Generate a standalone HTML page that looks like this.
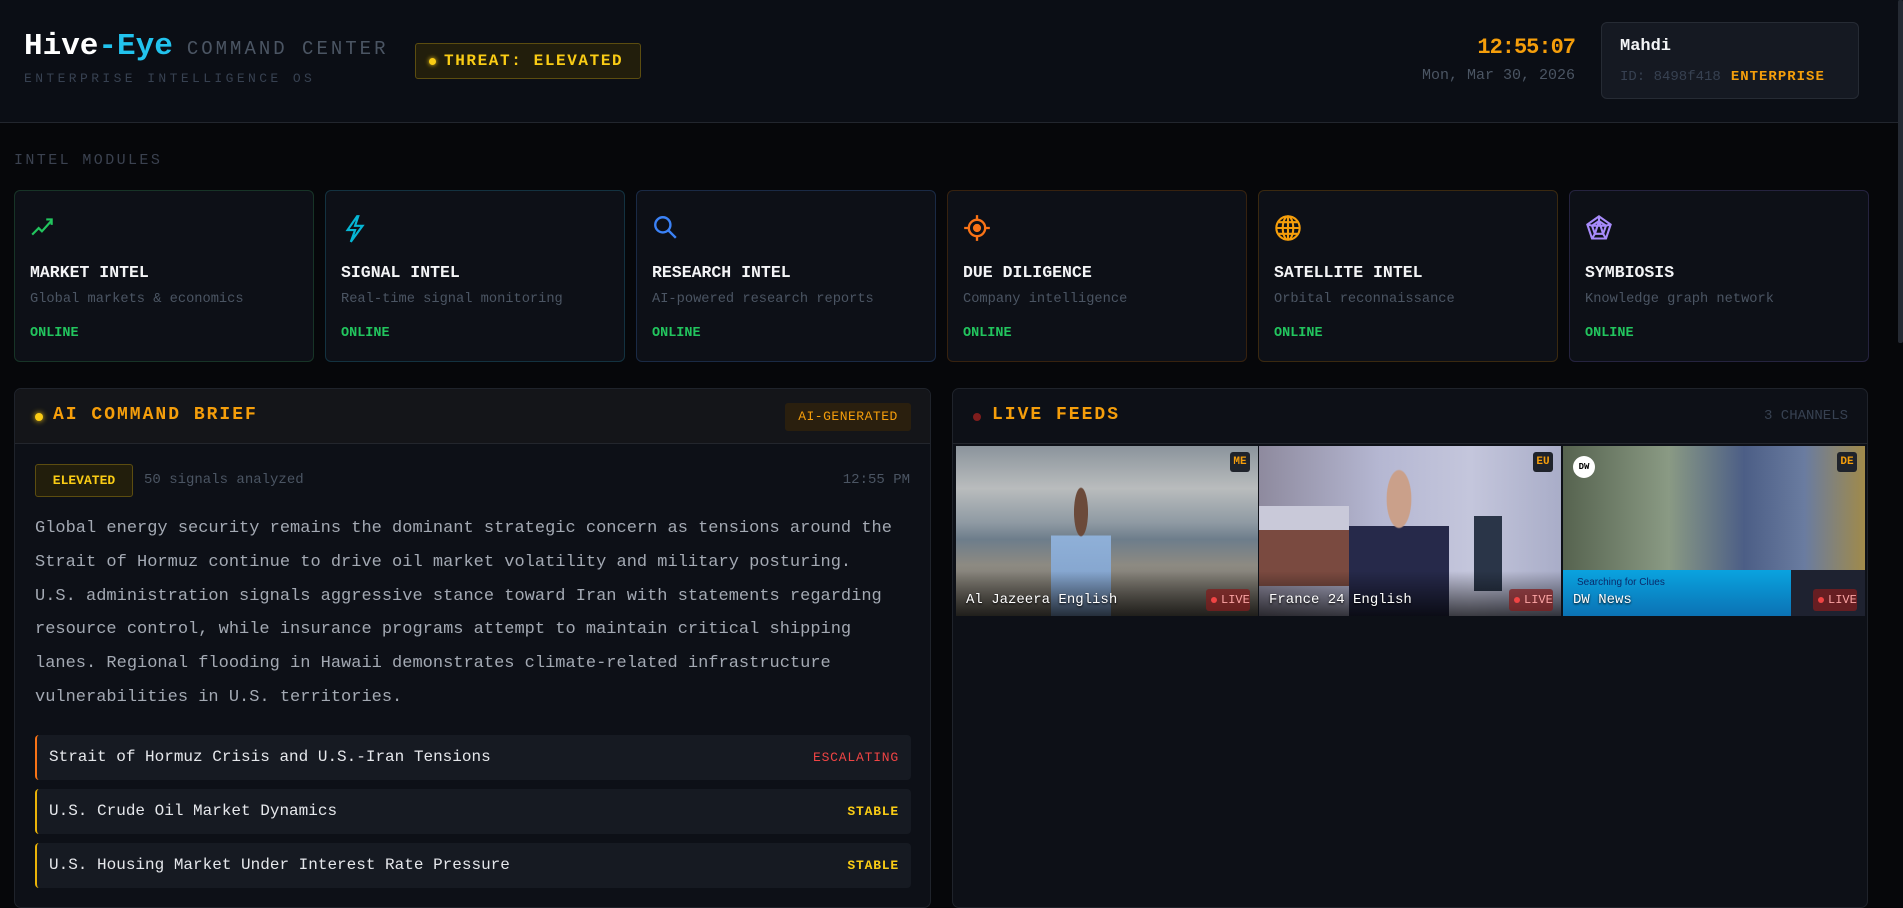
<!DOCTYPE html>
<html><head><meta charset="utf-8"><style>
*{box-sizing:border-box;margin:0;padding:0}
html,body{width:1903px;height:885px;overflow:hidden;background:#06070a;font-family:"Liberation Mono",monospace;color:#e5e7eb}
.abs{position:absolute}
header{position:absolute;left:0;top:0;width:1903px;height:123px;background:#0b0e15;border-bottom:1px solid #22262e}
.logo{left:24px;top:29px;font-size:31px;font-weight:bold;color:#fff;white-space:nowrap}
.logo .e{color:#22c3ee}
.logo .cc{font-size:19px;font-weight:normal;color:#4b5563;letter-spacing:3px;margin-left:14px}
.sub{left:24px;top:71px;font-size:13px;color:#374151;letter-spacing:3.4px;white-space:nowrap}
.threat{left:415px;top:43px;width:226px;height:36px;background:#221e0c;border:1px solid #5c4d10;border-radius:3px;color:#facc15;font-weight:bold;font-size:16px;letter-spacing:1.6px;line-height:34px;padding-left:28px;white-space:nowrap}
.threat:before{content:"";position:absolute;left:13px;top:14px;width:7px;height:7px;border-radius:50%;background:#facc15;box-shadow:0 0 5px #facc15}
.clock{right:328px;top:35px;font-size:22px;font-weight:bold;color:#f59e0b;letter-spacing:-1px}
.date{right:328px;top:67px;font-size:15px;color:#4b5563;white-space:nowrap}
.user{left:1601px;top:22px;width:258px;height:77px;background:#151922;border:1px solid #262b34;border-radius:6px}
.user .n{position:absolute;left:18px;top:14px;font-size:17px;font-weight:bold;color:#f3f4f6}
.user .i{position:absolute;left:18px;top:46px;font-size:14px;color:#374151;white-space:nowrap}
.user .i b{color:#f59e0b;letter-spacing:1px;margin-left:10px}
.scroll{left:1898px;top:0;width:5px;height:343px;background:#252a33;border-radius:2px}
.mods{left:14px;top:152px;font-size:15px;color:#3b4250;letter-spacing:2.4px}
.card{position:absolute;top:190px;width:300px;height:172px;background:#0d1017;border:1px solid;border-radius:6px}
.card svg{position:absolute;left:15px;top:23px}
.card .t{position:absolute;left:15px;top:72px;font-size:16.5px;font-weight:bold;color:#f3f4f6;white-space:nowrap}
.card .d{position:absolute;left:15px;top:101px;font-size:13.7px;color:#4b5563;white-space:nowrap}
.card .o{position:absolute;left:15px;top:135px;font-size:13.5px;font-weight:bold;color:#22c55e}
.panel{position:absolute;top:388px;height:520px;background:#0d1017;border:1px solid #1f232b;border-radius:7px;overflow:hidden}
.ph{position:absolute;left:0;top:0;right:0;height:55px;border-bottom:1px solid #23262d}
.ptitle{position:absolute;left:38px;top:16px;font-size:18px;font-weight:bold;color:#f59e0b;letter-spacing:2px;white-space:nowrap}
.dot{position:absolute;left:20px;top:24px;width:8px;height:8px;border-radius:50%}
.row{position:absolute;left:20px;width:876px;height:45px;background:#161a22;border-radius:4px;border-left:2px solid}
.row span{position:absolute;left:12px;top:13px;font-size:16px;color:#e5e7eb;white-space:nowrap}
.row b{position:absolute;right:12px;top:15px;font-size:13px;letter-spacing:.8px}
.tile{position:absolute;top:57px;height:170px;overflow:hidden}
.tag{position:absolute;right:8px;top:6px;width:20px;height:20px;background:#1f232b;color:#f59e0b;font-size:11px;font-weight:bold;text-align:center;line-height:20px;border-radius:3px}
.lbl{position:absolute;left:10px;bottom:8px;font-size:14px;color:#fff;white-space:nowrap;text-shadow:0 1px 2px #000}
.live{position:absolute;right:8px;bottom:5px;height:22px;width:44px;background:rgba(127,29,29,.75);color:#fca5a5;font-size:12px;line-height:22px;padding-left:15px;border-radius:3px}
.live:before{content:"";position:absolute;left:5px;top:8px;width:6px;height:6px;border-radius:50%;background:#ef4444}
.shade{position:absolute;left:0;right:0;bottom:0;height:45px;background:linear-gradient(transparent,rgba(0,0,0,.7))}
</style></head><body>
<header>
<div class="abs logo">Hive<span class="e">-Eye</span><span class="cc">COMMAND CENTER</span></div>
<div class="abs sub">ENTERPRISE INTELLIGENCE OS</div>
<div class="abs threat">THREAT: ELEVATED</div>
<div class="abs clock">12:55:07</div>
<div class="abs date">Mon, Mar 30, 2026</div>
<div class="abs user"><div class="n">Mahdi</div><div class="i">ID: 8498f418<b>ENTERPRISE</b></div></div>
</header>
<div class="abs scroll"></div>
<div class="abs mods">INTEL MODULES</div>

<div class="card" style="left:14px;border-color:#173427">
<svg width="26" height="26" viewBox="0 0 24 24" fill="none" stroke="#22c55e" stroke-width="2"><path d="M2 19l6-6 3 3 9-10M15 5h5v5"/></svg>
<div class="t">MARKET INTEL</div><div class="d">Global markets &amp; economics</div><div class="o">ONLINE</div></div>
<div class="card" style="left:325px;border-color:#133240">
<svg width="26" height="30" viewBox="0 0 24 28" fill="none" stroke="#06b6d4" stroke-width="2"><path d="M15 2L6 15h7l-4 11 11-15h-7l3-9z"/></svg>
<div class="t">SIGNAL INTEL</div><div class="d">Real-time signal monitoring</div><div class="o">ONLINE</div></div>
<div class="card" style="left:636px;border-color:#1a2a45">
<svg width="26" height="26" viewBox="0 0 24 24" fill="none" stroke="#3b82f6" stroke-width="2.2"><circle cx="10" cy="10" r="7"/><path d="M15 15l7 7"/></svg>
<div class="t">RESEARCH INTEL</div><div class="d">AI-powered research reports</div><div class="o">ONLINE</div></div>
<div class="card" style="left:947px;border-color:#37220f">
<svg width="28" height="28" viewBox="0 0 24 24" fill="none" stroke="#f97316" stroke-width="2"><circle cx="12" cy="12" r="7"/><circle cx="12" cy="12" r="2.5" fill="#f97316"/><path d="M12 1v4M12 19v4M1 12h4M19 12h4"/></svg>
<div class="t">DUE DILIGENCE</div><div class="d">Company intelligence</div><div class="o">ONLINE</div></div>
<div class="card" style="left:1258px;border-color:#3a2910">
<svg width="28" height="28" viewBox="0 0 24 24" fill="none" stroke="#f59e0b" stroke-width="1.8"><circle cx="12" cy="12" r="10"/><ellipse cx="12" cy="12" rx="4.5" ry="10"/><path d="M12 2v20M2 12h20M4 7h16M4 17h16"/></svg>
<div class="t">SATELLITE INTEL</div><div class="d">Orbital reconnaissance</div><div class="o">ONLINE</div></div>
<div class="card" style="left:1569px;border-color:#25233f">
<svg width="28" height="28" viewBox="0 0 24 24" fill="none" stroke="#a78bfa" stroke-width="1.8"><path d="M12 2l10 7-4 12H6L2 9z"/><path d="M12 6l6 4-2.5 7h-7L6 10z"/><path d="M12 2v4M22 9l-4 1M18 21l-2.5-4M6 21l2.5-4M2 9l4 1M12 6l3.5 11M12 6l-3.5 11M6 10l12 0"/></svg>
<div class="t">SYMBIOSIS</div><div class="d">Knowledge graph network</div><div class="o">ONLINE</div></div>

<div class="panel" style="left:14px;width:917px">
<div class="ph" style="background:#141519"></div>
<div class="dot" style="background:#facc15;box-shadow:0 0 6px #facc15"></div>
<div class="ptitle">AI COMMAND BRIEF</div>
<div class="abs" style="left:770px;top:14px;width:126px;height:28px;background:#2a1f0e;border-radius:3px;color:#f59e0b;font-size:13px;line-height:28px;text-align:center;letter-spacing:.5px">AI-GENERATED</div>
<div class="abs" style="left:20px;top:75px;width:98px;height:33px;background:#221e0c;border:1px solid #5c4d10;border-radius:3px;color:#facc15;font-size:13px;font-weight:bold;line-height:31px;text-align:center">ELEVATED</div>
<div class="abs" style="left:129px;top:83px;font-size:14px;color:#4b5563">50 signals analyzed</div>
<div class="abs" style="right:20px;top:83px;font-size:14px;color:#4b5563">12:55 PM</div>
<div class="abs" style="left:20px;top:123px;width:863px;font-size:17px;line-height:33.8px;color:#a3a9b3">Global energy security remains the dominant strategic concern as tensions around the Strait of Hormuz continue to drive oil market volatility and military posturing.<br>U.S. administration signals aggressive stance toward Iran with statements regarding resource control, while insurance programs attempt to maintain critical shipping lanes. Regional flooding in Hawaii demonstrates climate-related infrastructure vulnerabilities in U.S. territories.</div>
<div class="row" style="top:346px;border-color:#f97316"><span>Strait of Hormuz Crisis and U.S.-Iran Tensions</span><b style="color:#ef4444;font-weight:normal">ESCALATING</b></div>
<div class="row" style="top:400px;border-color:#eab308"><span>U.S. Crude Oil Market Dynamics</span><b style="color:#facc15">STABLE</b></div>
<div class="row" style="top:454px;border-color:#eab308"><span>U.S. Housing Market Under Interest Rate Pressure</span><b style="color:#facc15">STABLE</b></div>
</div>

<div class="panel" style="left:952px;width:916px">
<div class="ph"></div>
<div class="dot" style="background:#7f1d1d;left:20px"></div>
<div class="ptitle" style="left:39px">LIVE FEEDS</div>
<div class="abs" style="right:19px;top:19px;font-size:14px;color:#374151">3 CHANNELS</div>
<div class="tile" style="left:3px;width:302px;background:linear-gradient(#8b949c 0%,#b9bcbd 25%,#8f9aa3 45%,#6d7d8b 55%,#8d8a82 70%,#6b665c 100%)">
 <div class="abs" style="left:95px;top:40px;width:60px;height:130px;background:radial-gradient(ellipse at 50% 20%,#6b4a3a 0 16%,transparent 17%),linear-gradient(transparent 38%,#8fb0d8 38%,#7c9cc6)"></div>
 <div class="shade"></div><div class="tag">ME</div><div class="lbl">Al Jazeera English</div><div class="live">LIVE</div></div>
<div class="tile" style="left:306px;width:302px;background:linear-gradient(90deg,#8e8a9e,#b5b7d2 40%,#c4c6dc 70%,#a9adc8)">
 <div class="abs" style="left:0;top:60px;width:90px;height:80px;background:linear-gradient(#c9c9d9 0 30%,#7a4a40 30% 100%)"></div>
 <div class="abs" style="left:90px;top:20px;width:100px;height:150px;background:radial-gradient(ellipse at 50% 22%,#caa08a 0 17%,transparent 18%),linear-gradient(transparent 40%,#26294a 40%)"></div>
 <div class="abs" style="left:215px;top:70px;width:28px;height:75px;background:#2a3548"></div>
 <div class="shade"></div><div class="tag">EU</div><div class="lbl">France 24 English</div><div class="live">LIVE</div></div>
<div class="tile" style="left:610px;width:302px;background:linear-gradient(90deg,#56634f,#8a9a84 35%,#4c5e86 60%,#6a7ca0 80%,#a08a4a)">
 <div class="abs" style="left:0;bottom:0;width:228px;height:46px;background:linear-gradient(#0aa3df,#0b72b4)"></div>
 <div class="abs" style="left:228px;bottom:0;width:74px;height:46px;background:#1e2230"></div>
 <div class="abs" style="left:10px;top:10px;width:22px;height:22px;border-radius:50%;background:#fff;color:#000;font-size:9px;font-weight:bold;line-height:22px;text-align:center">DW</div>
 <div class="abs" style="left:14px;bottom:28px;font-family:'Liberation Sans',sans-serif;font-size:10px;color:#0a2a6a">Searching for Clues</div>
 <div class="tag">DE</div><div class="lbl">DW News</div><div class="live">LIVE</div></div>
</div>
</body></html>
